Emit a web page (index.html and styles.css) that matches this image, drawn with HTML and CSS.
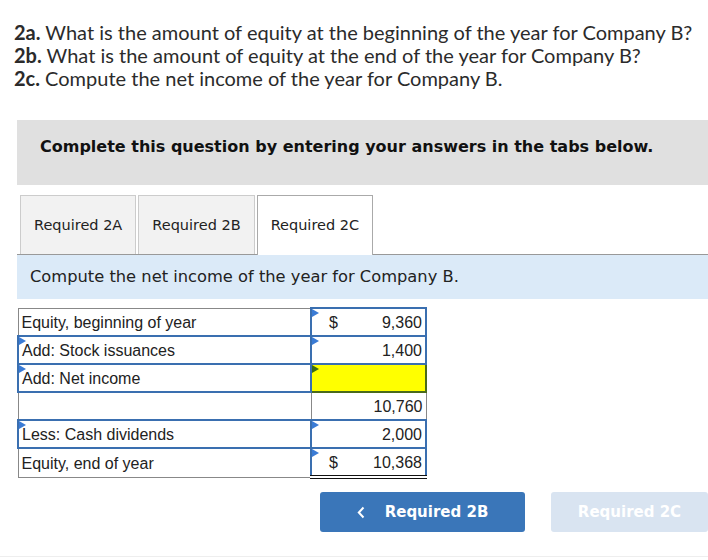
FILE: index.html
```html
<!DOCTYPE html>
<html lang="en">
<head>
  <meta charset="UTF-8">
  <title>Equity - Company B</title>
  <link rel="stylesheet" href="styles.css">
</head>
<body>

  <div class="prompt">
    <p><b>2a.</b> What is the amount of equity at the beginning of the year for Company B?</p>
    <p><b>2b.</b> What is the amount of equity at the end of the year for Company B?</p>
    <p><b>2c.</b> Compute the net income of the year for Company B.</p>
  </div>

  <div class="instructions">Complete this question by entering your answers in the tabs below.</div>

  <div class="tabs">
    <div class="tab">Required 2A</div>
    <div class="tab">Required 2B</div>
    <div class="tab active">Required 2C</div>
  </div>

  <div class="task">Compute the net income of the year for Company B.</div>

  <table class="sheet">
    <tr>
      <td class="label">Equity, beginning of year</td>
      <td class="amount input"><span class="flag"></span><span class="cur">$</span>9,360</td>
    </tr>
    <tr>
      <td class="label input"><span class="flag"></span>Add: Stock issuances</td>
      <td class="amount input"><span class="flag"></span>1,400</td>
    </tr>
    <tr>
      <td class="label input"><span class="flag"></span>Add: Net income</td>
      <td class="amount input marked"><span class="flag"></span></td>
    </tr>
    <tr>
      <td class="label"></td>
      <td class="amount total">10,760</td>
    </tr>
    <tr>
      <td class="label input"><span class="flag"></span>Less: Cash dividends</td>
      <td class="amount input"><span class="flag"></span>2,000</td>
    </tr>
    <tr>
      <td class="label">Equity, end of year</td>
      <td class="amount input final"><span class="flag"></span><span class="cur">$</span>10,368</td>
    </tr>
  </table>

  <div class="nav">
    <button class="prev">
      <svg class="chev" width="8" height="13" viewBox="0 0 8 13"><path d="M6.5 1.5 L1.8 6.5 L6.5 11.5" fill="none" stroke="#fff" stroke-width="2"/></svg>
      Required 2B
    </button>
    <button class="next" disabled>Required 2C</button>
  </div>

</body>
</html>
```

FILE: styles.css
```css
body {
  margin: 0;
  background: #fff;
  color: #222;
  font-family: "Liberation Sans", Arial, sans-serif;
}
.prompt {
  padding: 21px 0 0 14px;
  font-family: Lato, "Open Sans", sans-serif;
  font-size: 20px;
  color: #2b2b2b;
}
.prompt p {
  margin: 0;
  line-height: 23px;
}
.instructions {
  margin: 30px 0 0 17px;
  height: 65px;
  line-height: 54px;
  padding-left: 23px;
  background: #e0e0e0;
  font-family: "DejaVu Sans", Verdana, sans-serif;
  font-weight: bold;
  font-size: 16px;
  color: #111;
}
.tabs {
  display: flex;
  gap: 2px;
  margin: 10px 0 0 17px;
  padding-left: 3px;
  border-bottom: 1px solid #999;
}
.tab {
  height: 58px;
  line-height: 58px;
  padding: 0 13px;
  background: #f2f2f2;
  border: 1px solid #ccc;
  border-bottom: none;
  font-family: "DejaVu Sans", Tahoma, sans-serif;
  font-size: 14.5px;
  color: #222;
}
.tab.active {
  background: #fff;
  border-color: #aaa;
  margin-bottom: -1px;
  height: 59px;
}
.task {
  margin-left: 17px;
  height: 44px;
  line-height: 44px;
  padding-left: 13px;
  background: #dbeaf8;
  font-family: "DejaVu Sans", Verdana, sans-serif;
  font-size: 16.3px;
  color: #222;
}
.sheet {
  margin: 8px 0 0 17px;
  width: 410px;
  border-collapse: collapse;
  font-size: 16px;
  color: #222;
}
.sheet td {
  position: relative;
  height: 24px;
  padding: 2px 3px 0;
  border: 1px solid #888;
}
.sheet .label {
  width: 285px;
}
.sheet .amount {
  text-align: right;
}
.sheet td.input {
  border: 2px solid #3a6fb0;
}
.sheet .cur {
  float: left;
  padding-left: 14px;
}
.flag {
  position: absolute;
  left: 0;
  top: 0;
  border-top: 4px solid transparent;
  border-bottom: 4px solid transparent;
  border-left: 7px solid #3a7bd5;
}
.sheet td.marked {
  background: #ffff00;
  border-color: #4a6a1a;
  box-shadow: 0 -3px 0 #ffff00, -2px 0 0 #ffff00;
}
.marked .flag {
  border-left-color: #3c6b10;
}
.sheet td.total {
  border-top: 2px solid #111;
}
.sheet td.final {
  border-bottom: 4px double #111;
}
.nav {
  display: flex;
  gap: 26px;
  margin-top: 13px;
  padding: 0 0 24px 320px;
  border-bottom: 1px solid #eee;
}
.nav button {
  display: flex;
  align-items: center;
  justify-content: center;
  height: 40px;
  border: none;
  border-radius: 3px;
  font-family: "DejaVu Sans", Verdana, sans-serif;
  font-weight: bold;
  font-size: 15px;
  color: #fff;
}
.prev {
  width: 205px;
  background: #3a76b9;
}
.chev {
  margin-right: 20px;
}
.next {
  width: 157px;
  background: #d9e4f1;
}
```
